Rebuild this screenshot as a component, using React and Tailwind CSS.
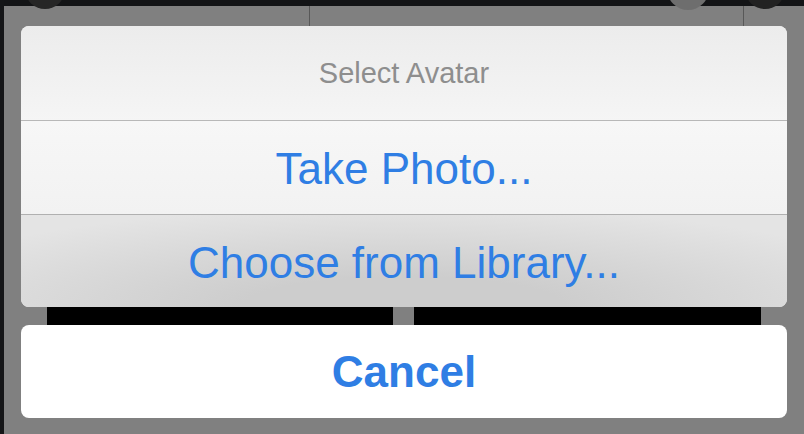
export default function App() {
  return (
    <div className="relative flex h-[434px] w-[804px] overflow-hidden bg-[#808080] font-['Liberation_Sans',Arial,sans-serif]">
      <div className="w-[4px] shrink-0 bg-[#141517]" />
      <div className="flex flex-1 flex-col">
        <div className="h-[6px] bg-[#131416]" />
        <div className="flex h-[20px]">
          <div className="w-[305px]" />
          <div className="w-[434px] border-l border-[#585858]" />
          <div className="border-l border-[#585858]" />
        </div>

        <div className="ml-[17px] flex h-[281px] w-[766px] flex-col overflow-hidden rounded-[8px] bg-[#f3f3f3]">
          <div className="flex h-[94px] items-center justify-center bg-gradient-to-b from-[#ececec] to-[#f5f5f5] pt-[1px] text-[29px] text-[#8e8e8e]">
            Select Avatar
          </div>
          <div className="h-px bg-[#b8b8b8]" />
          <button className="flex h-[93px] items-center justify-center bg-gradient-to-b from-[#f7f7f7] to-[#f2f2f2] pt-[3px] text-[44px] text-[#2f7ee4]">
            Take Photo...
          </button>
          <div className="h-px bg-[#b0b0b0]" />
          <button className="flex flex-1 items-center justify-center bg-[radial-gradient(ellipse_70%_110%_at_50%_100%,#cdcdcd_30%,#e4e4e4_100%)] pt-[3px] text-[44px] text-[#2f7ee4]">
            Choose from Library...
          </button>
        </div>

        <div className="flex h-[18px]">
          <div className="ml-[43px] w-[346px] bg-black" />
          <div className="ml-[21px] w-[347px] bg-black" />
        </div>

        <button className="ml-[17px] flex h-[93px] w-[766px] items-center justify-center rounded-[8px] bg-white pt-[1px] text-[44px] font-bold text-[#2f7ee4]">
          Cancel
        </button>
      </div>

      <div className="absolute left-[25px] top-[-31px] h-[40px] w-[40px] rounded-full bg-[#262626]" />
      <div className="absolute left-[667px] top-[-32px] h-[42px] w-[42px] rounded-full bg-[#6e6e6e]" />
      <div className="absolute left-[745px] top-[-31px] h-[40px] w-[40px] rounded-full bg-[#222222]" />
    </div>
  );
}
